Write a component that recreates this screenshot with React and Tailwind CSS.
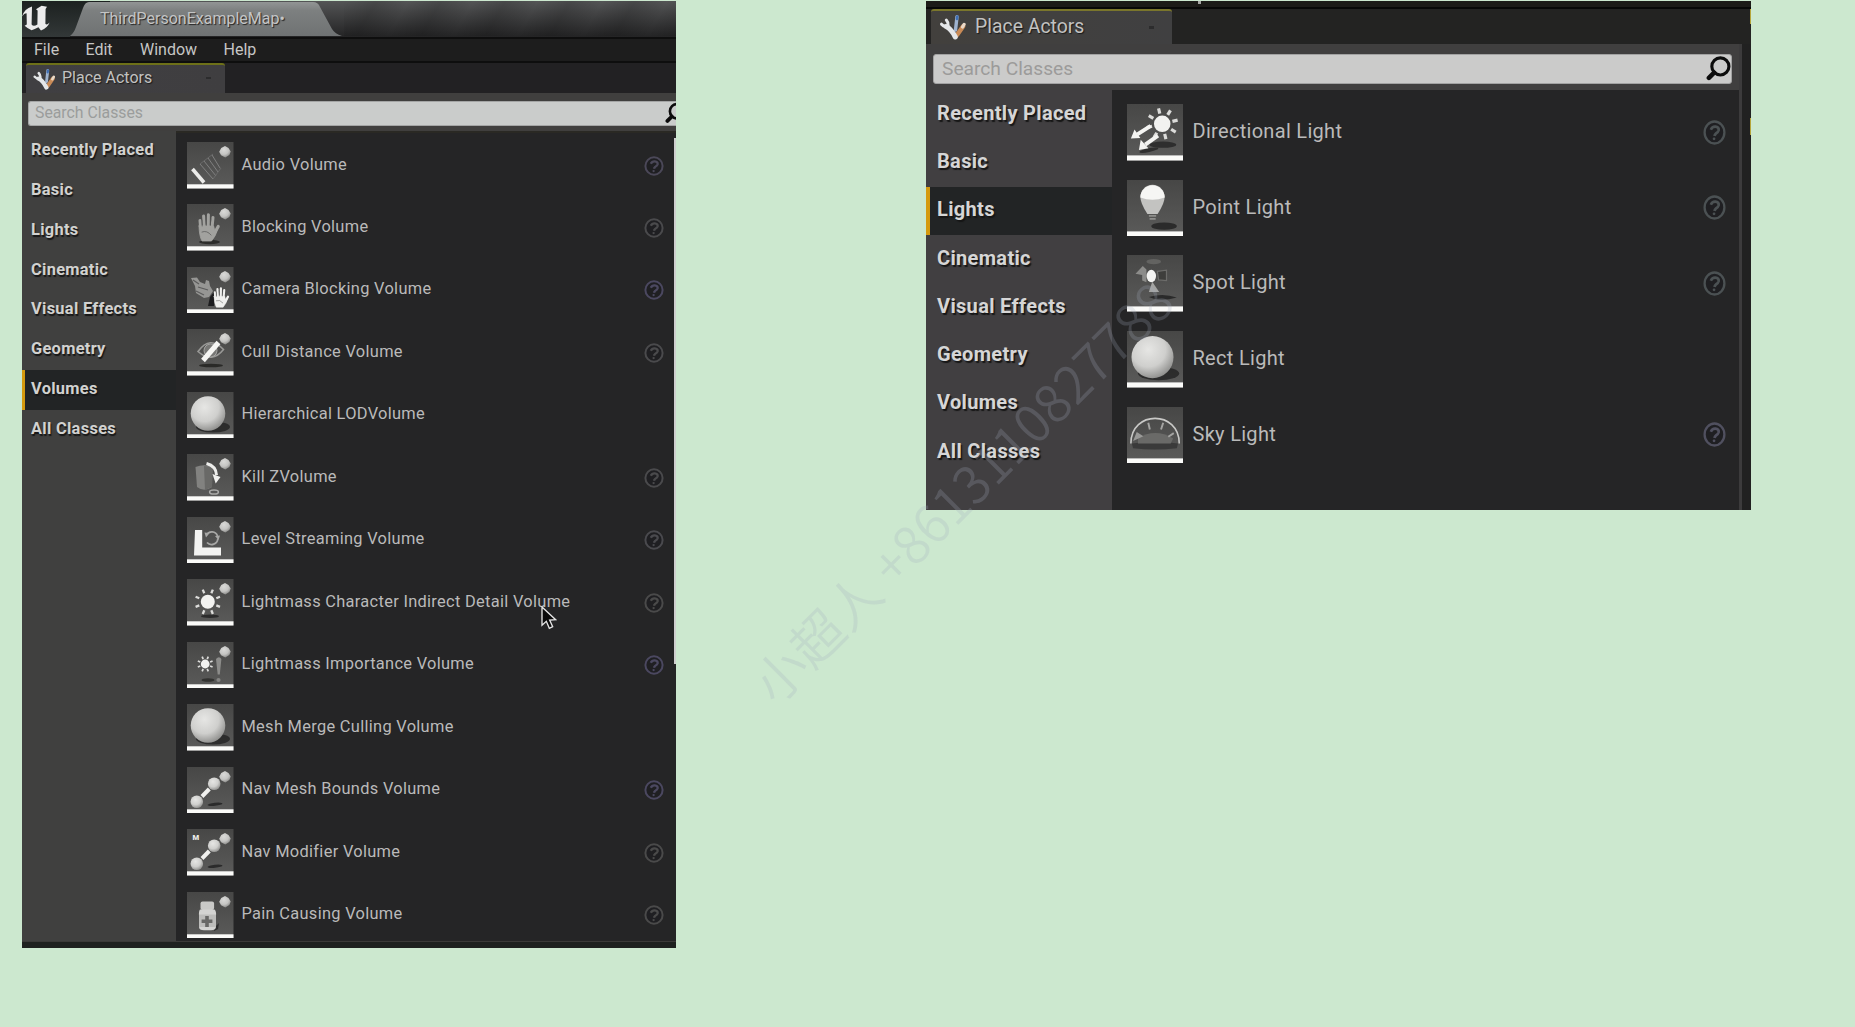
import React from "react";

const CATEGORIES = [
  "Recently Placed",
  "Basic",
  "Lights",
  "Cinematic",
  "Visual Effects",
  "Geometry",
  "Volumes",
  "All Classes",
];

const VOLUMES = [
  { name: "Audio Volume", icon: "audio", help: "#4b4858" },
  { name: "Blocking Volume", icon: "hand", help: "#4a4a4c" },
  { name: "Camera Blocking Volume", icon: "camera", help: "#4b4860" },
  { name: "Cull Distance Volume", icon: "cull", help: "#4a4a4c" },
  { name: "Hierarchical LODVolume", icon: "sphere" },
  { name: "Kill ZVolume", icon: "kill", help: "#4a4a4c" },
  { name: "Level Streaming Volume", icon: "level", help: "#4a4a4e" },
  { name: "Lightmass Character Indirect Detail Volume", icon: "sun", help: "#4a4a4a" },
  { name: "Lightmass Importance Volume", icon: "importance", help: "#4b4860" },
  { name: "Mesh Merge Culling Volume", icon: "sphere" },
  { name: "Nav Mesh Bounds Volume", icon: "nav", help: "#4b4860" },
  { name: "Nav Modifier Volume", icon: "navmod", help: "#4a4a4a" },
  { name: "Pain Causing Volume", icon: "pain", help: "#4a4a4a" },
];

const LIGHTS = [
  { name: "Directional Light", icon: "directional", help: "#4b5153" },
  { name: "Point Light", icon: "point", help: "#4b5153" },
  { name: "Spot Light", icon: "spot", help: "#4b5153" },
  { name: "Rect Light", icon: "sphere" },
  { name: "Sky Light", icon: "sky", help: "#50505f" },
];

const RAYS = [22.5, 67.5, 112.5, 157.5, 202.5, 247.5, 292.5, 337.5];

function Sun({ cx, cy, r, inner, outer, width, turn = 0 }) {
  return (
    <g>
      {RAYS.map((a) => {
        const t = ((a + turn) * Math.PI) / 180;
        return (
          <line
            key={a}
            x1={cx + inner * Math.cos(t)}
            y1={cy + inner * Math.sin(t)}
            x2={cx + outer * Math.cos(t)}
            y2={cy + outer * Math.sin(t)}
            stroke="#dcdcda"
            strokeWidth={width}
          />
        );
      })}
      <circle cx={cx} cy={cy} r={r} fill="#f2f2f0" />
    </g>
  );
}

function Hand({ fill }) {
  return (
    <g stroke={fill} strokeLinecap="round" fill="none">
      <path d="M13.6 24 L13 16.5 M17.3 23 L16.6 12 M21.2 23 L21.4 10.8 M25 24 L26 13.4" strokeWidth="3" />
      <path d="M27 30 L31.2 22.5" strokeWidth="3.2" />
      <path
        d="M12 22 Q19 20.5 26.6 22 L28 27 L30.6 25 Q29 32 24.5 37 L15 37 Q12.2 32 12 22 Z"
        fill={fill}
        strokeWidth="0.8"
      />
      <path d="M15.2 22 L15 16 M19.2 21.5 L19 14 M23.3 21.5 L23.8 15 M15 28 Q20 26 24 31" stroke="#555" strokeWidth="0.7" />
    </g>
  );
}

function NavPair() {
  return (
    <g>
      <ellipse cx="28" cy="37.3" rx="7.5" ry="1.5" fill="#2b2b2b" transform="rotate(-6 28 37.3)" />
      <path d="M15 29.5 L22.3 22" stroke="#f1f1ef" strokeWidth="4" />
      <circle cx="27.2" cy="16.8" r="6.3" fill="url(#ball)" />
      <circle cx="9.8" cy="34.8" r="6.3" fill="url(#ball)" />
    </g>
  );
}

function Glyph({ name }) {
  switch (name) {
    case "audio":
      return (
        <g fill="none">
          <path d="M13 22 L26 37 M17 19 L29 34 M21 16 L31 30 M25 13 L33 26" stroke="#858585" strokeWidth="0.9" />
          <path d="M13 22 L26 12 M26 37 L34 26" stroke="#6e6e6e" strokeWidth="0.8" />
          <path d="M5.5 27 L17 40.5" stroke="#ececea" strokeWidth="3.6" />
        </g>
      );
    case "hand":
      return (
        <g>
          <ellipse cx="22.5" cy="38" rx="10.5" ry="2.2" fill="#2c2c2a" />
          <Hand fill="#a2a29f" />
        </g>
      );
    case "camera":
      return (
        <g>
          <path d="M23 30 L27 25 L27 39 L21 39 Z" fill="#1d1d1f" />
          <path d="M4 11 L10 10.5 L13 15 L18 17 L19 13 L22 14 L23 19 L26 24 L22 30 L17 31 L9 26 L8 19 Z" fill="#969694" />
          <path d="M11 20 L21 23 M9 24 L17 28 M6 13 L12 17" stroke="#5c5c5c" strokeWidth="1.2" />
          <g transform="translate(18.5 13.5) scale(0.72)">
            <Hand fill="#f0f0ee" />
          </g>
        </g>
      );
    case "cull":
      return (
        <g fill="none">
          <ellipse cx="24" cy="36.5" rx="12" ry="1.8" fill="#2a2a28" />
          <path d="M11 22.5 Q23 6 36.5 20.5 Q25 35 11 22.5 Z" stroke="#989896" strokeWidth="1.6" />
          <circle cx="23.5" cy="21.5" r="6.5" fill="#777775" stroke="#a5a5a3" />
          <path d="M16 31.5 L31.5 13.5" stroke="#f6f6f4" strokeWidth="5" />
        </g>
      );
    case "sphere":
      return (
        <g>
          <ellipse cx="26" cy="35" rx="17" ry="5.5" fill="#262626" opacity="0.85" />
          <circle cx="21" cy="21.5" r="17.3" fill="url(#ball)" />
        </g>
      );
    case "kill":
      return (
        <g fill="none">
          <path d="M8.5 13 Q17 9.5 25.5 13 L25 33 Q17 38.5 10 33 Z" fill="#828280" />
          <path d="M17 12 L25.5 13 L25 33 L18 36 Z" fill="#696967" />
          <path d="M19.5 9.5 Q29 12 29.5 21" stroke="#eeeeec" strokeWidth="3" />
          <path d="M25.5 20 L33.5 23 L28.7 29.5 Z" fill="#f2f2f0" />
          <ellipse cx="27" cy="38" rx="4.4" ry="2.1" stroke="#a9a9a7" strokeWidth="1.5" />
        </g>
      );
    case "level":
      return (
        <g fill="none">
          <path d="M8 13 H15.2 V30.6 H34 V38.5 H7 Z" fill="#f3f3f1" />
          <path d="M19.5 18 A6 6 0 0 1 30.5 19 M30.8 21.5 A6.2 6.2 0 0 1 20 25.5" stroke="#a8a8a6" strokeWidth="1.7" />
          <path d="M17.5 15.5 L22.5 16 L19 20.5 Z M33 18.5 L28 19 L31.5 23 Z" fill="#a8a8a6" />
        </g>
      );
    case "sun":
      return (
        <g>
          <ellipse cx="23" cy="37.3" rx="9" ry="1.7" fill="#2c2c2c" />
          <Sun cx={20.8} cy={22.8} r={7} inner={9.2} outer={13.2} width={2.3} />
        </g>
      );
    case "importance":
      return (
        <g>
          <ellipse cx="21" cy="38" rx="6.5" ry="1.7" fill="#333331" />
          <Sun cx={18.2} cy={22} r={4.4} inner={5.3} outer={8} width={1.7} />
          <path d="M29 17 Q32 13.5 34.4 17 L32.8 32.5 H30.7 Z" fill="#8c8c8a" />
          <circle cx="31.5" cy="38" r="2.1" fill="#858583" />
        </g>
      );
    case "nav":
      return <NavPair />;
    case "navmod":
      return (
        <g>
          <NavPair />
          <text x="5.6" y="11.4" fontSize="7.6" fontWeight="900" fill="#ececea" fontFamily="Roboto, sans-serif">
            M
          </text>
        </g>
      );
    case "pain":
      return (
        <g>
          <path d="M27 36 L32 31 L31 37 L27 39 Z" fill="#2e2e2e" />
          <rect x="13.5" y="9.5" width="13.6" height="8.5" rx="2" fill="#c9c9c7" />
          <path d="M13 17.5 H27.5 Q29.5 19 29 24 V35 Q28.5 38.3 24 38.3 H17 Q12.2 38.3 12 35 V24 Q11.6 19 13 17.5 Z" fill="#d4d4d2" />
          <rect x="12" y="22.5" width="17" height="12.5" fill="#bdbdbb" />
          <path d="M20 24 V35 M14.6 29.3 H25.4" stroke="#686866" strokeWidth="3.6" />
        </g>
      );
    case "directional":
      return (
        <g>
          <ellipse cx="29.5" cy="33.5" rx="11" ry="2.6" fill="#2e2e2e" />
          <ellipse cx="18" cy="38" rx="8" ry="1.6" fill="#2e2e2e" transform="rotate(-12 18 38)" />
          <Sun cx={29} cy={16.3} r={6.8} inner={8.6} outer={13} width={2.6} turn={9} />
          <path d="M19.5 18 L8.5 25 M25.5 26 L15 33.5" stroke="#f4f4f2" strokeWidth="3.2" />
          <path d="M3.2 28.3 L6.2 21 L11 28 Z M9.8 37.8 L11.3 29.4 L17.6 36.4 Z" fill="#f4f4f2" />
        </g>
      );
    case "point":
      return (
        <g>
          <ellipse cx="30.5" cy="38" rx="10.5" ry="3" fill="#2b2b2b" />
          <path d="M11 14 A10 10 0 0 1 31 14 Q31 19 25.2 28 H16.8 Q11 19 11 14 Z" fill="#c3c3c1" />
          <path d="M11 14.4 A10 10 0 0 1 31 14.4 Q21 18 11 14.4 Z" fill="#f6f6f4" />
          <path d="M18 29.5 H24 M18.6 32 H23.6" stroke="#8e8e8c" strokeWidth="1.5" />
        </g>
      );
    case "spot":
      return (
        <g>
          <path d="M18 34.5 Q30 31 41 35 Q30 38 22 36 Z" fill="#2a2a2a" />
          <ellipse cx="22" cy="5.5" rx="6" ry="2.2" fill="#636361" />
          <path d="M7 15.5 L13 9 L16 12 V22.5 L12.5 21 V16.5 Z" fill="#8c8c8a" />
          <path d="M25 13.5 L32.5 12.5 V21 L26 20.5 Z" fill="#3e3e3c" stroke="#6c6c6a" strokeWidth="1" />
          <path d="M20.8 22 L26.5 30.5 H18 Z" fill="#a4a4a2" />
          <ellipse cx="20" cy="17.3" rx="3.9" ry="5.1" fill="#f4f4f2" />
        </g>
      );
    case "sky":
      return (
        <g fill="none">
          <path d="M4 30 Q23 27 42 30 L41 34 Q23 36 5 34 Z" fill="#3a3a3a" />
          <path d="M9 26 Q23 17 38 26 L36 30 H9 Z" fill="#6a6a68" />
          <path d="M3.2 30 C3.2 2.5 43 2.5 43 30" stroke="#c9c9c7" strokeWidth="1.3" />
          <path d="M5 28 L13.5 24 L8 20.5 Z" fill="#9a9a98" />
          <path d="M17.5 13 L18.8 18.5 M29.8 13 L28 18.5 M38.5 21.5 L34 24.5" stroke="#a4a4a2" strokeWidth="1.6" />
        </g>
      );
    default:
      return null;
  }
}

function Thumb({ icon, badge, className }) {
  return (
    <svg viewBox="0 0 46.5 46.5" className={className}>
      <rect width="46.5" height="46.5" fill="url(#tile)" />
      <Glyph name={icon} />
      {badge && (
        <path
          d="M38 4 L41.5 6 L43.8 9.5 L42.3 13 L38.3 15.4 L34 13.2 L32.2 9.7 L34.2 6 Z"
          fill="url(#ball)"
          opacity="0.92"
        />
      )}
      <rect y="42.3" width="46.5" height="4.2" fill="#fbfbf9" />
    </svg>
  );
}

function Defs() {
  return (
    <svg className="absolute h-0 w-0">
      <defs>
        <radialGradient id="ball" cx="0.4" cy="0.32" r="0.75">
          <stop offset="0" stopColor="#e6e6e4" />
          <stop offset="0.55" stopColor="#cfcfcd" />
          <stop offset="1" stopColor="#858583" />
        </radialGradient>
        <linearGradient id="tile" x1="0" y1="0" x2="0" y2="1">
          <stop offset="0" stopColor="#474746" />
          <stop offset="1" stopColor="#5b5b5a" />
        </linearGradient>
      </defs>
    </svg>
  );
}

function HelpIcon({ color, className }) {
  return (
    <svg viewBox="0 0 20 21" className={className} fill="none" stroke={color} preserveAspectRatio="none">
      <ellipse cx="10" cy="10.5" rx="8.6" ry="9.2" strokeWidth="2" fill="#1f1f22" />
      <path d="M6.8 8.2 Q8 5.4 10.8 5.6 Q14 6 13.6 8.6 Q13.2 10.2 11.2 11.4 Q10.2 12.2 10 13.4" strokeWidth="2.4" />
      <circle cx="9.6" cy="15.8" r="0.6" strokeWidth="1.2" />
    </svg>
  );
}

function ToolsIcon({ className }) {
  return (
    <svg viewBox="0 0 26 25" className={className} fill="none" strokeLinecap="round">
      <path d="M17.5 1.8 L16 15" stroke="#9fb3cf" strokeWidth="3.4" />
      <path d="M17.8 1.5 L17.4 4" stroke="#3f6fb5" strokeWidth="2.6" />
      <path d="M23.5 11.5 L17.5 20" stroke="#c98a56" strokeWidth="4.6" />
      <path d="M24.6 9.4 L23 12" stroke="#ead9c8" strokeWidth="3.2" />
      <path d="M6.5 11.5 Q11.5 13.5 15.8 22" stroke="#e4e6e8" strokeWidth="5" />
      <path d="M2 9.2 Q5 12.6 8.6 10.2 Q9 7.4 6.8 5" stroke="#e4e6e8" strokeWidth="3" />
    </svg>
  );
}

function SearchIcon({ className }) {
  return (
    <svg viewBox="0 0 24 24" className={className} fill="none" stroke="#0c0c0c">
      <circle cx="13.8" cy="10" r="8.2" strokeWidth="3" />
      <path d="M7.8 16 L2.8 21" strokeWidth="4.4" strokeLinecap="round" />
    </svg>
  );
}

function UnrealLogo() {
  return (
    <svg viewBox="0 0 30 27" className="h-[27px] w-[30px] shrink-0" fill="#ececec">
      <path d="M0 11.5 Q2.5 3.5 10 1.5 L9.6 19.6 Q11.6 22.2 15.4 19.4 L15.6 5.4 L14 4.2 L19.6 0.8 L25 1.8 L23.6 4 L23.4 18.8 Q24.6 20.6 27.6 17.6 Q25.6 23 19 25.6 L16.4 22.2 Q12.6 24.4 9.6 25.2 Q5.6 23.6 2.6 20.8 L4.8 19.6 L4.6 8.4 Q2.4 8 0 11.5 Z" />
    </svg>
  );
}

function VolumesPanel() {
  return (
    <section className="mt-px flex h-[947px] w-[654px] flex-col overflow-hidden bg-[#3f3f3f]">
      <div className="flex h-[36px] shrink-0 items-start bg-linear-to-b from-[#545556] to-[#242425]">
        <div className="flex h-full w-[48px] shrink-0 items-start bg-linear-to-b from-[#1c2120] to-[#333838] pt-[4px]">
          <UnrealLogo />
        </div>
        <div className="relative h-[35px] w-[274px] shrink-0">
          <svg viewBox="0 0 274 35" className="absolute inset-0 h-full w-full">
            <defs>
              <linearGradient id="docTab" x1="0" y1="0" x2="0" y2="1">
                <stop offset="0" stopColor="#929595" />
                <stop offset="0.25" stopColor="#7d8080" />
                <stop offset="1" stopColor="#6f7273" />
              </linearGradient>
              <linearGradient id="docSide" x1="0" y1="0" x2="0" y2="1">
                <stop offset="0" stopColor="#1c2120" />
                <stop offset="1" stopColor="#333838" />
              </linearGradient>
            </defs>
            <path d="M0 0 H40 V35 H0 Z" fill="url(#docSide)" />
            <path d="M0 35 Q4 32 6 26 L13 7 Q15 1 19 1 H243 Q248 1 250 6 L262 28 Q265 33 272 35 Z" fill="url(#docTab)" />
          </svg>
          <div className="relative flex h-full items-center whitespace-nowrap pl-[30px] text-[16px] text-[#c4c5c5] [text-shadow:1px_1px_1px_#222]">
            ThirdPersonExampleMap•
          </div>
        </div>
        <div className="h-[35px] flex-1 bg-[repeating-linear-gradient(120deg,rgba(0,0,0,0)_0px,rgba(0,0,0,0.14)_28px,rgba(0,0,0,0)_56px)]" />
      </div>
      <div className="flex h-[26px] shrink-0 items-center border-t-2 border-b-2 border-[#0e0e0e] bg-[#1d1d1d] pl-[12px] text-[16px] text-[#c6c6c5]">
        <span className="w-[51.5px]">File</span>
        <span className="w-[54.5px]">Edit</span>
        <span className="w-[83.5px]">Window</span>
        <span>Help</span>
      </div>
      <div className="flex h-[30px] shrink-0 bg-[#222123] pl-[4px]">
        <div className="flex w-[199px] items-center rounded-t-[3px] border-t-2 border-[#6d7018] bg-linear-to-r from-[#403f42] to-[#3f3e40] pl-[7px] text-[16px] text-[#c2c2c1] [text-shadow:1px_1px_1px_#1a1a1a]">
          <ToolsIcon className="h-[21px] w-[22px]" />
          <span className="ml-[7px] pb-[2px]">Place Actors</span>
          <span className="mb-[2px] ml-auto mr-[14px] h-[2px] w-[5px] bg-[#2c2c2d]" />
        </div>
      </div>
      <div className="flex h-[38px] shrink-0 items-start bg-[#403f3e] pt-[7.5px] pl-[6px]">
        <div className="flex h-[25px] flex-1 items-center rounded-l-[3px] border border-r-0 border-[#a4a5a5] bg-[#cacccb] pl-[6px] text-[15.8px] text-[#9b9d9c]">
          <span className="flex-1">Search Classes</span>
          <SearchIcon className="-mr-[10px] h-[22px] w-[21px] shrink-0" />
        </div>
      </div>
      <div className="flex min-h-0 flex-1">
        <nav className="flex w-[154px] shrink-0 flex-col bg-[#40403f]">
          {CATEGORIES.map((c) => (
            <div
              key={c}
              className={
                "flex h-[39.8px] shrink-0 items-center whitespace-nowrap border-l-[3px] pl-[6px] pb-px text-[16.4px] font-bold tracking-[0.3px] text-[#d2d2d0] [text-shadow:1px_1.5px_1px_#161616] " +
                (c === "Volumes" ? "border-[#d59a0e] bg-[#222425]" : "border-transparent")
              }
            >
              {c}
            </div>
          ))}
        </nav>
        <div className="flex min-w-0 flex-1 flex-col border-t-2 border-[#2a2924] bg-[#252526]">
          <div className="flex flex-1 overflow-hidden">
            <ul className="flex-1 pt-[9px] pl-[11px]">
              {VOLUMES.map((v) => (
                <li key={v.name} className="flex h-[62.47px] items-start">
                  <Thumb icon={v.icon} badge={v.icon !== "sphere"} className="h-[46.5px] w-[46.5px] shrink-0" />
                  <span className="ml-[8px] flex h-[45.5px] flex-1 items-center whitespace-nowrap text-[16.4px] tracking-[0.31px] text-[#bababa]">
                    {v.name}
                  </span>
                  {v.help && <HelpIcon color={v.help} className="mt-[13.5px] mr-[10px] h-[20px] w-[20px]" />}
                </li>
              ))}
            </ul>
            <div className="w-[2px] pt-[5px]">
              <div className="h-[526px] w-full bg-[#cfcfcf]" />
            </div>
          </div>
          <div className="h-[3px] shrink-0" />
        </div>
      </div>
      <div className="h-[7px] shrink-0 border-t border-[#3b3a38] bg-[#1e211f]" />
    </section>
  );
}

function LightsPanel() {
  return (
    <section className="mt-px ml-[250px] flex h-[509px] w-[825px] flex-col overflow-hidden bg-[#242425]">
      <div className="flex h-[8px] shrink-0 border-b-2 border-[#080808] bg-[#1c1b18] pl-[272px]">
        <span className="h-[3px] w-[3px] bg-[#a8a8a6]" />
      </div>
      <div className="flex h-[35px] shrink-0 bg-[#232322] pl-[5px]">
        <div className="flex w-[241px] items-center rounded-t-[3px] border-t-2 border-[#7a762c] bg-linear-to-r from-[#42403d] to-[#404041] pl-[8px] text-[19.4px] text-[#c2c2c1] [text-shadow:1px_1px_1px_#1a1a1a]">
          <ToolsIcon className="h-[25px] w-[27px]" />
          <span className="ml-[9px] pb-[2px]">Place Actors</span>
          <span className="ml-auto mr-[18px] h-[3px] w-[5px] bg-[#2c2c2d]" />
        </div>
        <div className="ml-auto h-[15px] w-px bg-[#b5a53a]" />
      </div>
      <div className="flex min-h-0 flex-1">
        <div className="flex w-[816px] flex-col border-r-3 border-[#3c3b3c] bg-[#403f3f]">
          <div className="flex h-[46px] shrink-0 items-start pt-[10px] pl-[7px]">
            <div className="flex h-[29.5px] w-[799px] items-center rounded-[3px] border border-[#a2a2a2] bg-[#cbcbca] pl-[8px] text-[19.2px] text-[#9c9b9a]">
              <span className="flex-1 pb-px">Search Classes</span>
              <SearchIcon className="h-[25px] w-[25px]" />
            </div>
          </div>
          <div className="flex min-h-0 flex-1">
            <nav className="flex w-[186px] shrink-0 flex-col bg-[#413f41]">
              {CATEGORIES.map((c) => (
                <div
                  key={c}
                  className={
                    "flex h-[48.3px] shrink-0 items-center whitespace-nowrap border-l-[4px] pl-[7px] pb-[3px] text-[20px] font-bold tracking-[0.33px] text-[#d6d6d6] [text-shadow:1.5px_2px_1px_#161616] " +
                    (c === "Lights" ? "border-[#d59a0e] bg-[#222425]" : "border-transparent")
                  }
                >
                  {c}
                </div>
              ))}
            </nav>
            <ul className="flex-1 bg-[#252526] pt-[14px] pl-[14.5px]">
              {LIGHTS.map((l) => (
                <li key={l.name} className="flex h-[75.7px] items-start">
                  <Thumb icon={l.icon} className="h-[56.5px] w-[56.5px] shrink-0" />
                  <span className="ml-[9.5px] flex h-[54px] flex-1 items-center text-[20px] tracking-[0.3px] text-[#bababa]">
                    {l.name}
                  </span>
                  {l.help && <HelpIcon color={l.help} className="mt-[15.5px] mr-[13px] h-[25px] w-[23px]" />}
                </li>
              ))}
            </ul>
          </div>
        </div>
        <div className="flex flex-1 justify-end bg-[#212121] pt-[74px]">
          <div className="h-[17px] w-px bg-[#b5a53a]" />
        </div>
      </div>
    </section>
  );
}

export default function App() {
  return (
    <main className="relative flex h-[1027px] w-[1855px] items-start overflow-hidden bg-[#cce8cf] pl-[22px] font-[Roboto,'Noto_Sans_CJK_SC',sans-serif] leading-none">
      <Defs />
      <VolumesPanel />
      <LightsPanel />
      <svg viewBox="0 0 24 36" className="absolute top-[606px] left-[541px] h-[24px] w-[16px]">
        <path d="M1.5 1.5 V29 L8 23 L12.5 33.5 L17.5 31 L13 21 L22 20.5 Z" fill="#0a0a0a" stroke="#e6e6e6" strokeWidth="2" />
      </svg>
      <div className="pointer-events-none absolute top-[491px] left-[961px] -translate-x-1/2 -translate-y-1/2 -rotate-45 whitespace-nowrap font-['Noto_Sans_CJK_SC',sans-serif] text-[52px] font-[350] leading-none text-[#a6aec0]/23">
        小超人 +8613110827788
      </div>
    </main>
  );
}
